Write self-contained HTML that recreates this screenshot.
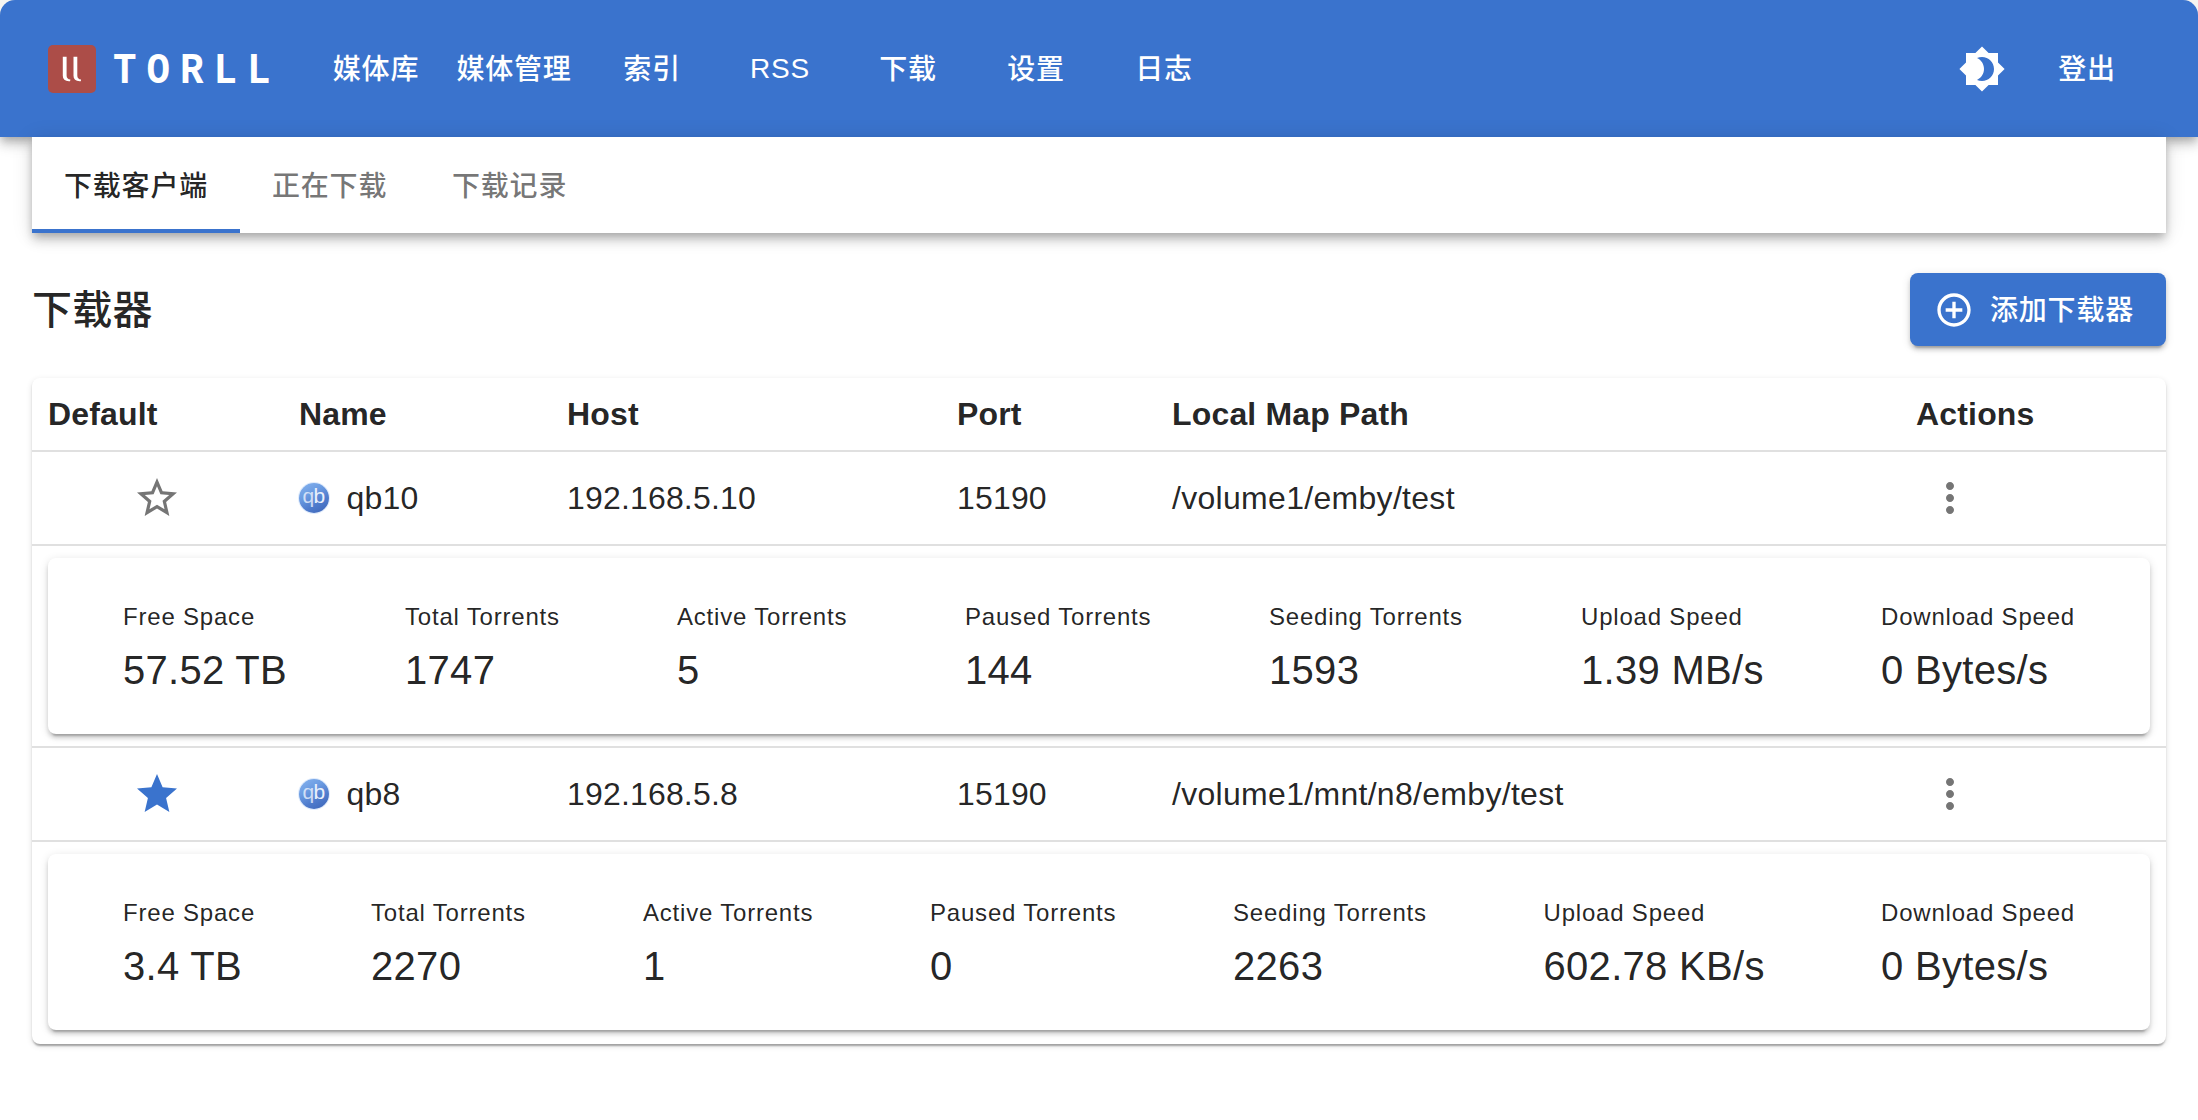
<!DOCTYPE html>
<html lang="zh-CN">
<head>
<meta charset="utf-8">
<title>TORLL - 下载器</title>
<style>
*{box-sizing:border-box;margin:0;padding:0}
html,body{width:2198px;height:1120px;overflow:hidden;background:#f6f5f1}
body{font-family:"Liberation Sans","Noto Sans CJK SC",sans-serif;color:rgba(0,0,0,.87);position:relative}
.win{position:absolute;left:0;top:0;width:2198px;height:1120px;background:#fff;border-radius:15px 15px 0 0;overflow:hidden}
.abs{position:absolute}
/* app bar */
.appbar{position:absolute;left:0;top:0;width:2198px;height:137px;background:#3a73cd;color:#fff;
 box-shadow:0 4px 8px -2px rgba(0,0,0,.2),0 8px 10px 0 rgba(0,0,0,.14),0 2px 20px 0 rgba(0,0,0,.12);z-index:5}
.logo{position:absolute;left:48px;top:45px;width:48px;height:48px;border-radius:5px;background:#ac4d48}
.brand{position:absolute;left:113px;top:46.500px;height:50px;line-height:50px;font-family:"Liberation Mono",monospace;font-size:45px;font-weight:700;letter-spacing:11.500px;
 transform-origin:0 50%;transform:scaleX(.87);white-space:nowrap}
.nav{position:absolute;top:1px;height:137px;line-height:137px;text-align:center;font-size:28px;font-weight:500;letter-spacing:.8px;white-space:nowrap}
/* tabs */
.tabs{position:absolute;left:32px;top:137px;width:2134px;height:96px;background:#fff;
 box-shadow:0 4px 8px -2px rgba(0,0,0,.2),0 8px 10px 0 rgba(0,0,0,.14),0 2px 20px 0 rgba(0,0,0,.12);z-index:6}
.tab{position:absolute;top:2px;height:96px;line-height:96px;font-size:28px;font-weight:500;letter-spacing:.8px;color:rgba(0,0,0,.55);white-space:nowrap}
.tab.sel{color:rgba(0,0,0,.87)}
.ind{position:absolute;left:0;bottom:0;width:208px;height:4px;background:#3a73cd}
h6.title{position:absolute;left:32px;top:280px;height:60px;line-height:60px;font-size:40px;font-weight:500;letter-spacing:.3px}
.addbtn{position:absolute;left:1910px;top:273px;width:256px;height:73px;border-radius:8px;background:#3a73cd;color:#fff;
 box-shadow:0 6px 2px -4px rgba(0,0,0,.2),0 4px 4px 0 rgba(0,0,0,.14),0 2px 10px 0 rgba(0,0,0,.12)}
.addbtn svg{position:absolute;left:24px;top:17px;width:40px;height:40px;fill:#fff}
.addbtn span{position:absolute;left:80px;top:2px;height:73px;line-height:72px;font-size:28px;font-weight:500;letter-spacing:.8px;white-space:nowrap}
/* table */
.paper{position:absolute;left:32px;top:378px;width:2134px;height:666px;background:#fff;border-radius:8px;
 box-shadow:0 4px 2px -2px rgba(0,0,0,.2),0 2px 2px 0 rgba(0,0,0,.14),0 2px 6px 0 rgba(0,0,0,.12)}
.hline{position:absolute;left:0;width:2134px;height:2px;background:#e0e0e0}
.th{position:absolute;top:0;height:73px;line-height:73px;font-size:32px;font-weight:700;letter-spacing:.17px;white-space:nowrap}
.td{position:absolute;height:93px;line-height:93px;font-size:32px;letter-spacing:.17px;white-space:nowrap}
.card{position:absolute;left:16px;width:2102px;height:176px;background:#fff;border-radius:8px;
 box-shadow:0 6px 2px -4px rgba(0,0,0,.2),0 4px 4px 0 rgba(0,0,0,.14),0 2px 10px 0 rgba(0,0,0,.12)}
.st{position:absolute;top:0;white-space:nowrap}
.st i{position:absolute;left:0;top:39px;height:40px;line-height:40px;font-style:normal;font-size:24px;letter-spacing:.8px}
.st b{position:absolute;left:0;top:80px;height:64px;line-height:64px;font-weight:400;font-size:40px;letter-spacing:.3px}
.ico{position:absolute;width:48px;height:48px}
.qb{position:absolute;width:30px;height:30px;border-radius:50%;background:linear-gradient(150deg,#86b3ee 0%,#6c9ce2 35%,#4f7ccd 65%,#3c63b6 100%);
 box-shadow:0 0 0 1px rgba(150,190,245,.3);color:#eaf1fc;font-size:21px;line-height:26px;text-align:center;letter-spacing:-.8px;text-indent:-1px}
</style>
</head>
<body>
<div class="win">
 <div class="appbar">
  <div class="logo">
   <svg width="48" height="48" viewBox="0 0 48 48"><path d="M14.8 11.800h3.800v18.700q0 3.700 3.800 4l-.3 1.700q-7.300.5-7.300-5.400zM25.500 11.800h3.800v18.700q0 3.700 3.800 4l-.3 1.700q-7.300.5-7.300-5.400z" fill="#fff"/></svg>
  </div>
  <div class="brand">TORLL</div>
  <div class="nav" style="left:312px;width:128px">媒体库</div>
  <div class="nav" style="left:440px;width:148px">媒体管理</div>
  <div class="nav" style="left:588px;width:128px">索引</div>
  <div class="nav" style="left:716px;width:128px"><span style="position:relative;top:-1.500px">RSS</span></div>
  <div class="nav" style="left:844px;width:128px">下载</div>
  <div class="nav" style="left:972px;width:128px">设置</div>
  <div class="nav" style="left:1100px;width:128px">日志</div>
  <svg class="ico" style="left:1958px;top:45px" viewBox="0 0 24 24" fill="#fff"><path d="M20 8.69V4h-4.69L12 .69 8.69 4H4v4.69L.69 12 4 15.31V20h4.69L12 23.31 15.31 20H20v-4.69L23.31 12 20 8.69zM12 18c-.89 0-1.74-.2-2.5-.55C11.56 16.5 13 14.42 13 12s-1.44-4.5-3.5-5.45C10.26 6.2 11.11 6 12 6c3.31 0 6 2.69 6 6s-2.69 6-6 6z"/></svg>
  <div class="nav" style="left:2023px;width:128px">登出</div>
 </div>

 <div class="tabs">
  <div class="tab sel" style="left:32px">下载客户端</div>
  <div class="tab" style="left:240px">正在下载</div>
  <div class="tab" style="left:420px">下载记录</div>
  <div class="ind"></div>
 </div>

 <h6 class="title">下载器</h6>
 <div class="addbtn">
  <svg viewBox="0 0 24 24"><path d="M13 7h-2v4H7v2h4v4h2v-4h4v-2h-4V7zm-1-5C6.48 2 2 6.48 2 12s4.48 10 10 10 10-4.480 10-10S17.520 2 12 2zm0 18c-4.410 0-8-3.590-8-8s3.590-8 8-8 8 3.590 8 8-3.590 8-8 8z"/></svg>
  <span>添加下载器</span>
 </div>

 <div class="paper">
  <div class="th" style="left:16px">Default</div>
  <div class="th" style="left:267px">Name</div>
  <div class="th" style="left:535px">Host</div>
  <div class="th" style="left:925px">Port</div>
  <div class="th" style="left:1140px">Local Map Path</div>
  <div class="th" style="left:1884px">Actions</div>
  <div class="hline" style="top:72px"></div>

  <!-- row 1 -->
  <svg class="ico" style="left:101px;top:96px" viewBox="0 0 24 24" fill="#757575"><path d="M22 9.240l-7.190-.620L12 2 9.190 8.630 2 9.240l5.460 4.730L5.820 21 12 17.270 18.180 21l-1.630-7.030L22 9.240zM12 15.400l-3.760 2.270 1-4.280-3.320-2.880 4.380-.38L12 6.100l1.710 4.040 4.380.38-3.320 2.880 1 4.280L12 15.400z"/></svg>
  <div class="qb" style="left:267px;top:104.500px"><span style="opacity:.8">q</span>b</div>
  <div class="td" style="left:314.500px;top:74px">qb10</div>
  <div class="td" style="left:535px;top:74px">192.168.5.10</div>
  <div class="td" style="left:925px;top:74px">15190</div>
  <div class="td" style="left:1140px;top:74px;letter-spacing:.3px">/volume1/emby/test</div>
  <svg class="ico" style="left:1894px;top:96px" viewBox="0 0 24 24" fill="#757575"><path d="M12 8c1.100 0 2-.9 2-2s-.9-2-2-2-2 .9-2 2 .9 2 2 2zm0 2c-1.100 0-2 .9-2 2s.9 2 2 2 2-.9 2-2-.9-2-2-2zm0 6c-1.100 0-2 .9-2 2s.9 2 2 2 2-.9 2-2-.9-2-2-2z"/></svg>
  <div class="hline" style="top:166px"></div>
  <div class="card" style="top:180px">
   <div class="st" style="left:75px"><i>Free Space</i><b>57.52 TB</b></div>
   <div class="st" style="left:357px"><i>Total Torrents</i><b>1747</b></div>
   <div class="st" style="left:629px"><i>Active Torrents</i><b>5</b></div>
   <div class="st" style="left:917px"><i>Paused Torrents</i><b>144</b></div>
   <div class="st" style="left:1221px"><i>Seeding Torrents</i><b>1593</b></div>
   <div class="st" style="left:1533px"><i>Upload Speed</i><b>1.39 MB/s</b></div>
   <div class="st" style="left:1833px"><i>Download Speed</i><b>0 Bytes/s</b></div>
  </div>
  <div class="hline" style="top:368px"></div>

  <!-- row 2 -->
  <svg class="ico" style="left:101px;top:392px" viewBox="0 0 24 24" fill="#3a73cd"><path d="M12 17.270L18.180 21l-1.640-7.030L22 9.240l-7.190-.610L12 2 9.190 8.630 2 9.240l5.460 4.730L5.820 21z"/></svg>
  <div class="qb" style="left:267px;top:400.500px"><span style="opacity:.8">q</span>b</div>
  <div class="td" style="left:314.500px;top:370px">qb8</div>
  <div class="td" style="left:535px;top:370px">192.168.5.8</div>
  <div class="td" style="left:925px;top:370px">15190</div>
  <div class="td" style="left:1140px;top:370px;letter-spacing:.3px">/volume1/mnt/n8/emby/test</div>
  <svg class="ico" style="left:1894px;top:392px" viewBox="0 0 24 24" fill="#757575"><path d="M12 8c1.100 0 2-.9 2-2s-.9-2-2-2-2 .9-2 2 .9 2 2 2zm0 2c-1.100 0-2 .9-2 2s.9 2 2 2 2-.9 2-2-.9-2-2-2zm0 6c-1.100 0-2 .9-2 2s.9 2 2 2 2-.9 2-2-.9-2-2-2z"/></svg>
  <div class="hline" style="top:462px"></div>
  <div class="card" style="top:476px">
   <div class="st" style="left:75px"><i>Free Space</i><b>3.4 TB</b></div>
   <div class="st" style="left:323px"><i>Total Torrents</i><b>2270</b></div>
   <div class="st" style="left:595px"><i>Active Torrents</i><b>1</b></div>
   <div class="st" style="left:882px"><i>Paused Torrents</i><b>0</b></div>
   <div class="st" style="left:1185px"><i>Seeding Torrents</i><b>2263</b></div>
   <div class="st" style="left:1495.500px"><i>Upload Speed</i><b>602.78 KB/s</b></div>
   <div class="st" style="left:1833px"><i>Download Speed</i><b>0 Bytes/s</b></div>
  </div>
 </div>
</div>
</body>
</html>
